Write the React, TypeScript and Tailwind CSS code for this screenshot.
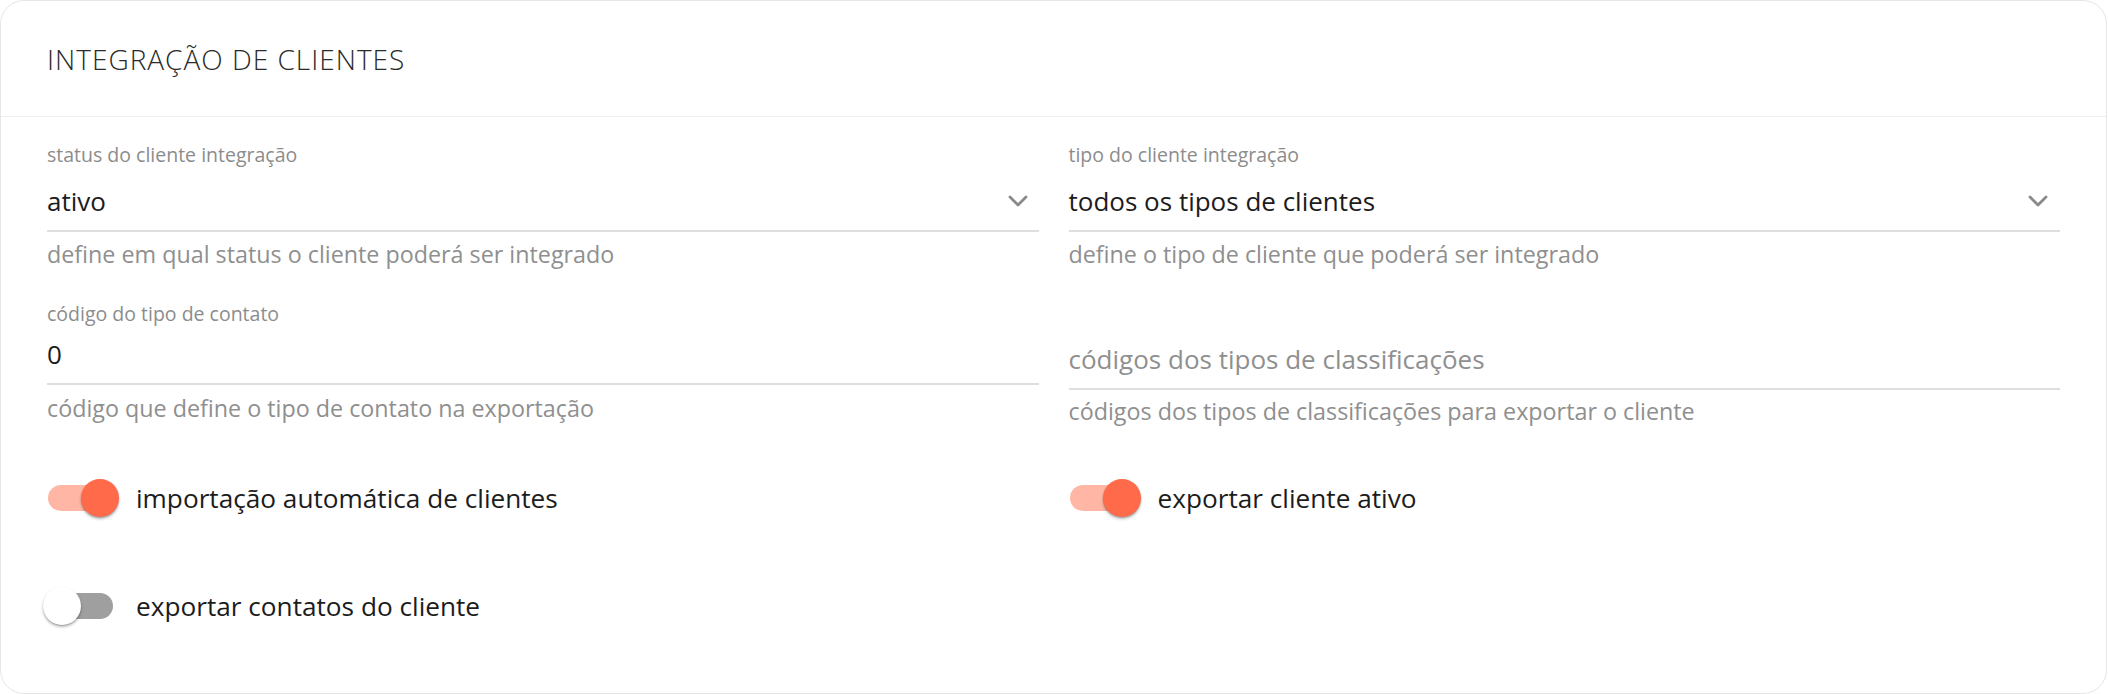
import React from "react";

const font = { fontFamily: '"Open Sans", "Noto Sans", sans-serif' };

const Chevron = () => (
  <svg width="20" height="12" viewBox="0 0 20 12" className="shrink-0">
    <polyline
      points="2,2 10,10 18,2"
      fill="none"
      stroke="#8a8a8a"
      strokeWidth="2.8"
      strokeLinecap="round"
      strokeLinejoin="round"
    />
  </svg>
);

const Toggle = ({ on, label }: { on: boolean; label: string }) => (
  <div className="flex items-center">
    <div className="relative -ml-[4px] h-[38px] w-[76px] shrink-0">
      <div
        className={`absolute left-[5px] top-[6px] h-[26px] w-[65px] rounded-full ${
          on ? "bg-[#ffb6a5]" : "bg-[#9f9f9f]"
        }`}
      ></div>
      <div
        className={`absolute top-0 h-[38px] w-[38px] rounded-full shadow-[0_2px_3px_rgba(0,0,0,0.28),0_1px_1px_rgba(0,0,0,0.14)] ${
          on ? "left-[38px] bg-[#ff6a4b]" : "left-0 bg-white"
        }`}
      ></div>
    </div>
    <span className="ml-[17px] text-[26.2px] leading-[34px] text-[#1c1c1c]">{label}</span>
  </div>
);

export default function App() {
  return (
    <div className="bg-white" style={font}>
      <div className="w-[2107px] rounded-[24px] border border-[#e6e6e6] bg-white pb-[68px]">
        <div className="flex h-[116px] items-center border-b border-[#efefef] px-[46px]">
          <h2 className="text-[28px] font-light tracking-[1px] text-[#2a2a2a]">
            INTEGRAÇÃO DE CLIENTES
          </h2>
        </div>

        <div className="px-[46px]">
          {/* selects */}
          <div className="grid grid-cols-2 gap-x-[30px]">
            <div>
              <div className="pt-[25px] text-[19.5px] leading-[26px] text-[#8c8c8c]">
                status do cliente integração
              </div>
              <div className="flex h-[64px] items-center justify-between border-b-2 border-[#dedede] pr-[11px] pt-[3px]">
                <span className="text-[26px] leading-[34px] text-[#1c1c1c]">ativo</span>
                <Chevron />
              </div>
              <div className="mt-[7px] text-[23.3px] leading-[30px] text-[#8f8f8f]">
                define em qual status o cliente poderá ser integrado
              </div>
            </div>
            <div>
              <div className="pt-[25px] text-[19.5px] leading-[26px] text-[#8c8c8c]">
                tipo do cliente integração
              </div>
              <div className="flex h-[64px] items-center justify-between border-b-2 border-[#dedede] pr-[12px] pt-[3px]">
                <span className="text-[26px] leading-[34px] text-[#1c1c1c]">
                  todos os tipos de clientes
                </span>
                <Chevron />
              </div>
              <div className="mt-[7px] text-[23.3px] leading-[30px] text-[#8f8f8f]">
                define o tipo de cliente que poderá ser integrado
              </div>
            </div>
          </div>

          {/* codes */}
          <div className="grid grid-cols-2 items-start gap-x-[30px]">
            <div>
              <div className="mt-[32px] text-[19.5px] leading-[26px] text-[#8c8c8c]">
                código do tipo de contato
              </div>
              <div className="flex h-[58px] items-center border-b-2 border-[#dedede] pb-[3px]">
                <span className="text-[26px] leading-[34px] text-[#1c1c1c]">0</span>
              </div>
              <div className="mt-[8px] text-[23.3px] leading-[30px] text-[#8f8f8f]">
                código que define o tipo de contato na exportação
              </div>
            </div>
            <div>
              <div className="flex h-[121px] items-end border-b-2 border-[#dedede] pb-[12px]">
                <span className="text-[26px] leading-[34px] text-[#8f8f8f]">
                  códigos dos tipos de classificações
                </span>
              </div>
              <div className="mt-[6px] text-[23.3px] leading-[30px] text-[#8f8f8f]">
                códigos dos tipos de classificações para exportar o cliente
              </div>
            </div>
          </div>

          {/* switches */}
          <div className="mt-[53px] grid grid-cols-2 gap-x-[30px] gap-y-[70px]">
            <Toggle on label="importação automática de clientes" />
            <Toggle on label="exportar cliente ativo" />
            <Toggle on={false} label="exportar contatos do cliente" />
          </div>
        </div>
      </div>
    </div>
  );
}
